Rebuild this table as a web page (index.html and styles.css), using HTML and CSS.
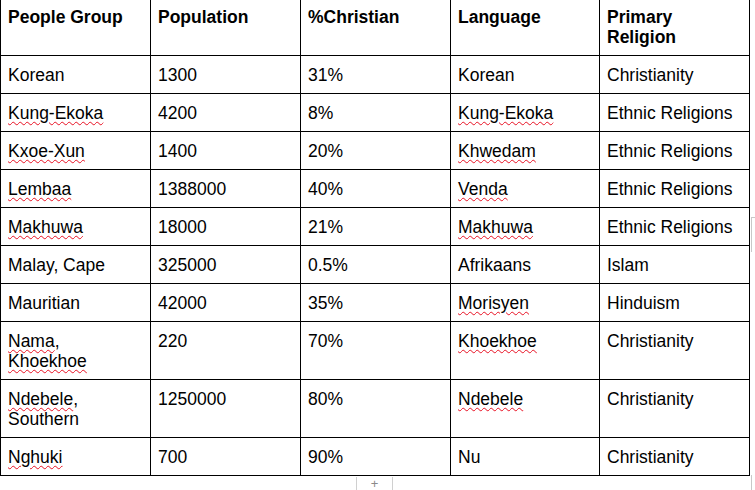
FILE: index.html
```html
<!DOCTYPE html>
<html lang="en">
<head>
<meta charset="utf-8">
<title>People Groups</title>
<link rel="stylesheet" href="styles.css">
</head>
<body>
<div class="page">
  <table class="grid">
    <colgroup>
      <col class="c1"><col class="c2"><col class="c3"><col class="c4"><col class="c5">
    </colgroup>
    <thead>
      <tr>
        <th>People Group</th>
        <th>Population</th>
        <th>%Christian</th>
        <th>Language</th>
        <th>Primary Religion</th>
      </tr>
    </thead>
    <tbody>
      <tr><td>Korean</td><td>1300</td><td>31%</td><td>Korean</td><td>Christianity</td></tr>
      <tr><td><span class="sp">Kung-Ekoka</span></td><td>4200</td><td>8%</td><td><span class="sp">Kung-Ekoka</span></td><td>Ethnic Religions</td></tr>
      <tr><td><span class="sp">Kxoe-Xun</span></td><td>1400</td><td>20%</td><td><span class="sp">Khwedam</span></td><td>Ethnic Religions</td></tr>
      <tr><td><span class="sp">Lembaa</span></td><td>1388000</td><td>40%</td><td><span class="sp">Venda</span></td><td>Ethnic Religions</td></tr>
      <tr><td><span class="sp">Makhuwa</span></td><td>18000</td><td>21%</td><td><span class="sp">Makhuwa</span></td><td>Ethnic Religions</td></tr>
      <tr><td>Malay, Cape</td><td>325000</td><td>0.5%</td><td>Afrikaans</td><td>Islam</td></tr>
      <tr><td>Mauritian</td><td>42000</td><td>35%</td><td><span class="sp">Morisyen</span></td><td>Hinduism</td></tr>
      <tr><td><span class="sp">Nama</span>,<br><span class="sp">Khoekhoe</span></td><td>220</td><td>70%</td><td><span class="sp">Khoekhoe</span></td><td>Christianity</td></tr>
      <tr><td><span class="sp">Ndebele</span>,<br>Southern</td><td>1250000</td><td>80%</td><td><span class="sp">Ndebele</span></td><td>Christianity</td></tr>
      <tr><td><span class="sp">Nghuki</span></td><td>700</td><td>90%</td><td>Nu</td><td>Christianity</td></tr>
    </tbody>
  </table>
  <div class="mark-right"></div>
  <div class="mark-corner"></div>
  <div class="add-row">+</div>
</div>
</body>
</html>
```

FILE: styles.css
```css
html, body {
  margin: 0;
  padding: 0;
  background: #fff;
}

.page {
  position: relative;
  width: 755px;
  height: 490px;
  overflow: hidden;
  font-family: "Liberation Sans", Arial, sans-serif;
  font-size: 17.5px;
  color: #000;
}

.grid {
  border-collapse: collapse;
  table-layout: fixed;
  width: 750px;
  margin-top: -3px;
}

.c1, .c2, .c3, .c5 { width: 150px; }
.c4 { width: 149px; }

.grid th,
.grid td {
  border: 1px solid #000;
  padding: 9px 6px 8px 7px;
  line-height: 20px;
  text-align: left;
  vertical-align: top;
  font-weight: normal;
}

.grid th {
  font-weight: bold;
}

.sp {
  text-decoration-line: underline;
  text-decoration-style: wavy;
  text-decoration-color: #e81123;
  text-decoration-thickness: 1px;
  text-underline-offset: 2px;
}

.mark-right {
  position: absolute;
  left: 751px;
  top: 217px;
  width: 4px;
  height: 34px;
  border-left: 1px solid #c8c8c8;
  border-top: 1px solid #c8c8c8;
}

.mark-corner {
  position: absolute;
  left: 751px;
  top: 475px;
  width: 4px;
  height: 15px;
  border-left: 1px solid #c8c8c8;
}

.add-row {
  position: absolute;
  left: 356px;
  top: 477px;
  width: 35px;
  height: 13px;
  border-left: 1px solid #d0d0d0;
  border-right: 1px solid #d0d0d0;
  color: #8a8a8a;
  font-size: 13px;
  line-height: 13px;
  text-align: center;
}
```
